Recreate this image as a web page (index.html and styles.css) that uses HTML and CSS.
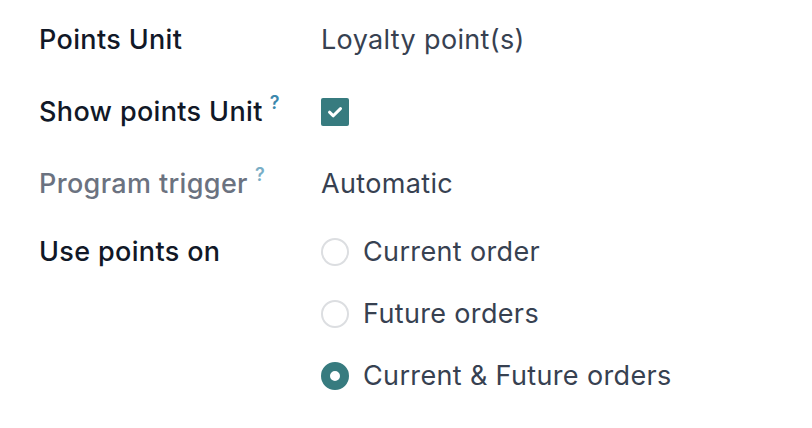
FILE: index.html
```html
<!DOCTYPE html>
<html>
<head>
<meta charset="utf-8">
<link rel="stylesheet" href="styles.css">
</head>
<body>
<div class="form">
  <div class="row r1">
    <div class="label">Points Unit</div>
    <div class="value">Loyalty point(s)</div>
  </div>
  <div class="row r2">
    <div class="label">Show points Unit<sup class="help">?</sup></div>
    <div class="value"><span class="checkbox"><svg viewBox="0 0 28 28" width="28" height="28"><path d="M8.5 14.2 L12.3 17.8 L19.5 10.6" fill="none" stroke="#fff" stroke-width="3" stroke-linecap="round" stroke-linejoin="round"/></svg></span></div>
  </div>
  <div class="row r3">
    <div class="label muted">Program trigger<sup class="help">?</sup></div>
    <div class="value">Automatic</div>
  </div>
  <div class="row r4">
    <div class="label">Use points on</div>
    <div class="value radios">
      <div class="radio"><span class="dot"></span><span>Current order</span></div>
      <div class="radio"><span class="dot"></span><span>Future orders</span></div>
      <div class="radio"><span class="dot checked"></span><span>Current &amp; Future orders</span></div>
    </div>
  </div>
</div>
</body>
</html>
```
FILE: styles.css
```css
html, body {
  margin: 0;
  padding: 0;
  background: #ffffff;
}
body {
  font-family: Inter, "Noto Sans", sans-serif;
  font-size: 27px;
  letter-spacing: 0.35px;
  color: #374151;
}
.form {
  padding: 20px 0 0 39px;
}
.row {
  display: flex;
  align-items: flex-start;
}
.r1 { margin-bottom: 32px; }
.r2 { margin-bottom: 32px; }
.r3 { margin-bottom: 28px; }
.label {
  width: 282px;
  flex: none;
  height: 40px;
  line-height: 40px;
  font-weight: 500;
  color: #111827;
}
.label.muted {
  color: #6b7280;
}
.help {
  font-size: 18px;
  font-weight: 600;
  color: #3b88ad;
  margin-left: 7px;
  vertical-align: top;
  position: relative;
  top: -9px;
}
.label.muted .help {
  color: #79aec6;
}
.value {
  line-height: 40px;
  min-height: 40px;
  display: flex;
  align-items: center;
}
.checkbox {
  width: 28px;
  height: 28px;
  border-radius: 2px;
  background: #377b7f;
  display: flex;
}
.radios {
  flex-direction: column;
  align-items: flex-start;
  gap: 22px;
}
.radio {
  display: flex;
  align-items: center;
  height: 40px;
  gap: 14px;
}
.dot {
  width: 28px;
  height: 28px;
  box-sizing: border-box;
  border-radius: 50%;
  border: 2px solid #dcdee1;
  background: #fff;
}
.dot.checked {
  border: 9px solid #377b7f;
  background: #fff;
}
```
